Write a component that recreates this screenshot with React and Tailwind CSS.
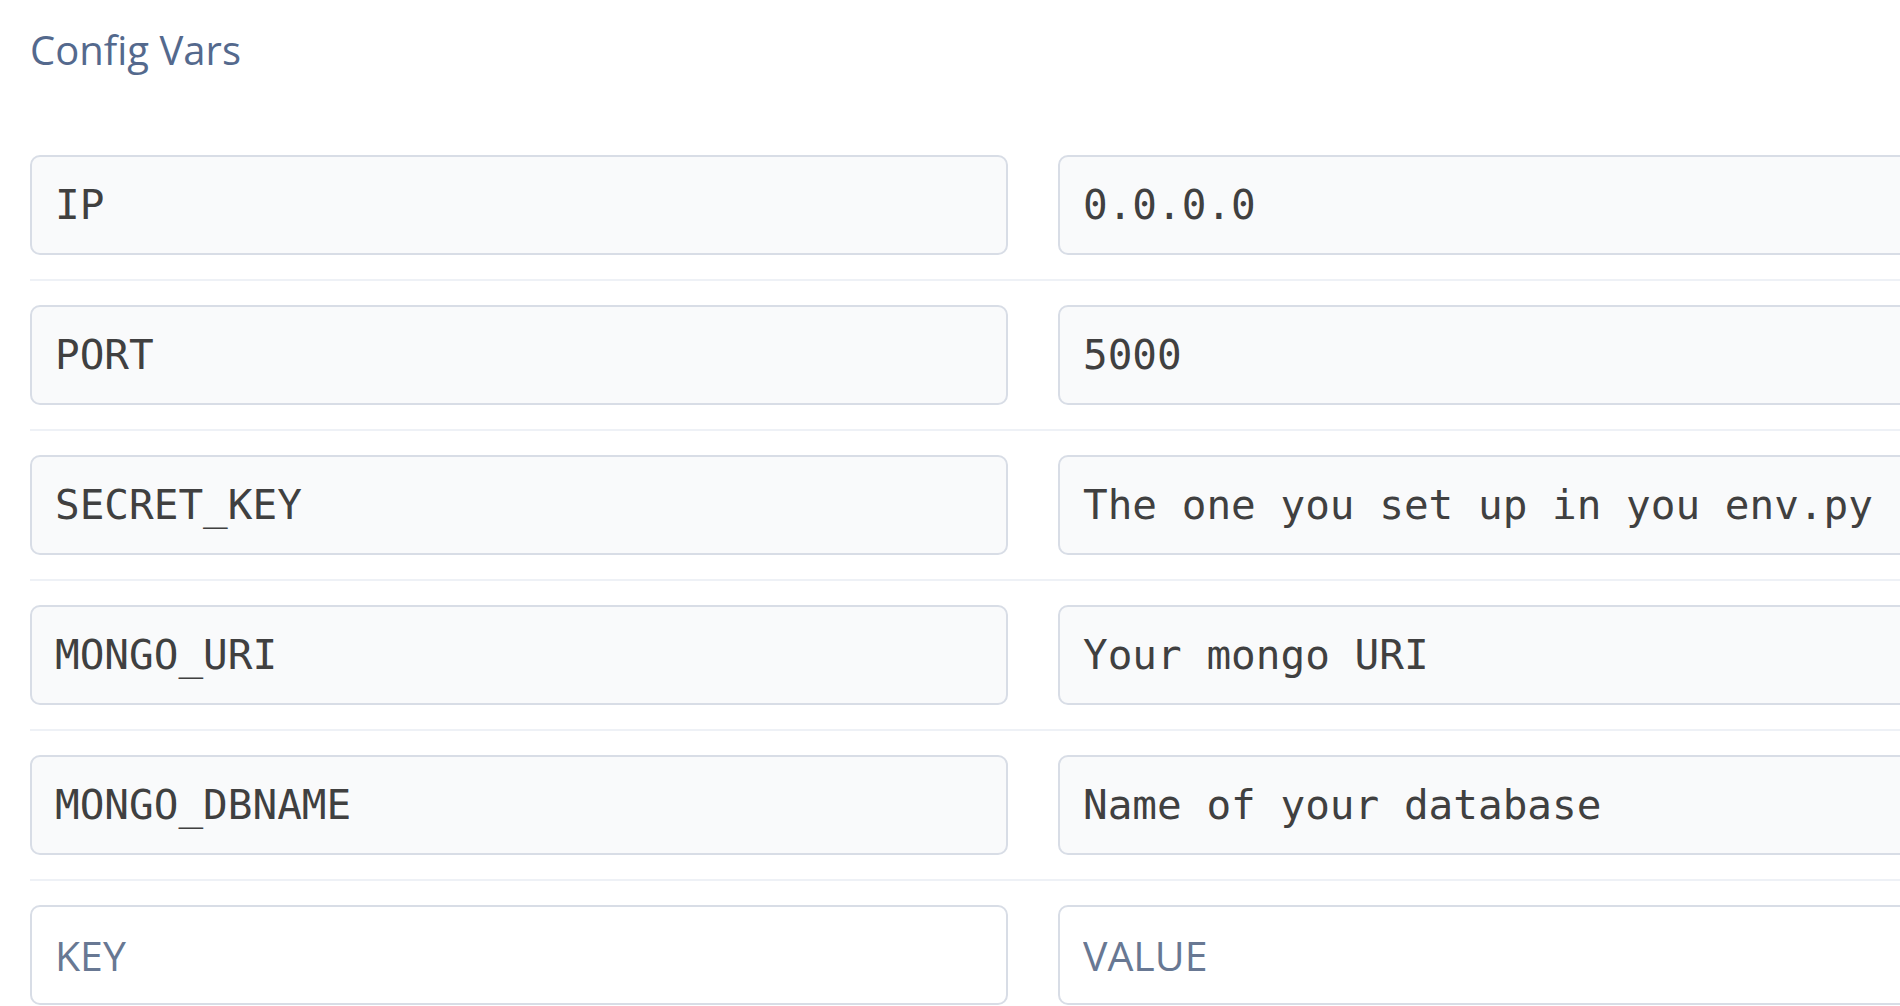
import React from "react";

const vars = [
  { key: "IP", value: "0.0.0.0" },
  { key: "PORT", value: "5000" },
  { key: "SECRET_KEY", value: "The one you set up in you env.py" },
  { key: "MONGO_URI", value: "Your mongo URI" },
  { key: "MONGO_DBNAME", value: "Name of your database" },
];

const filledInput =
  "h-[100px] w-[978px] shrink-0 rounded-[10px] border-2 border-[#d8dde6] bg-[#f9fafb] px-[23px] font-['DejaVu_Sans_Mono',monospace] text-[41px] text-[#404040] outline-none";

const emptyInput =
  "h-[100px] w-[978px] shrink-0 rounded-[10px] border-2 border-[#d8dde6] bg-white px-[23px] font-['Open_Sans',sans-serif] text-[41px] text-[#404040] placeholder:text-[#687893] outline-none";

const ConfigRow = ({ name, value }) => (
  <>
    <div className="flex gap-[50px]">
      <input className={filledInput} defaultValue={name} readOnly />
      <input className={filledInput} defaultValue={value} readOnly />
    </div>
    <div className="my-[24px] h-[2px] bg-[#eef1f6]" />
  </>
);

const App = () => {
  return (
    <div className="h-[1006px] w-[1900px] overflow-hidden bg-white pl-[30px]">
      <h2 className="pt-[26px] font-['Open_Sans',sans-serif] text-[40px] leading-[48px] text-[#54698d]">
        Config Vars
      </h2>
      <div className="mt-[81px] flex flex-col">
        {vars.map((v) => (
          <ConfigRow key={v.key} name={v.key} value={v.value} />
        ))}
        <div className="flex gap-[50px]">
          <input className={emptyInput} placeholder="KEY" />
          <input className={emptyInput} placeholder="VALUE" />
        </div>
      </div>
    </div>
  );
};

export default App;
